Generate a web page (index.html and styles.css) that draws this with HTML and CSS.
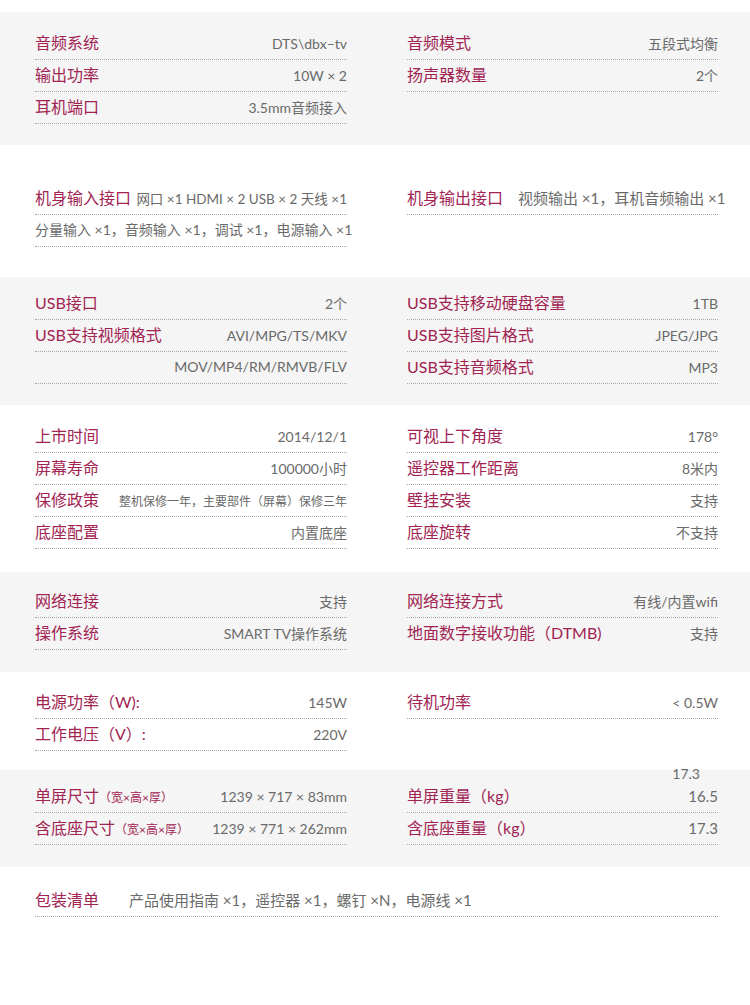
FILE: index.html
```html
<!DOCTYPE html>
<html lang="zh-CN">
<head>
    <meta charset="UTF-8">
    <meta name="viewport" content="width=device-width, initial-scale=1.0">
    <title>规格参数</title>
    <link rel="stylesheet" href="styles.css">
</head>
<body>
    <div class="band gray s1">
        <div class="grid">
            <div class="col">
                <div class="row"><span class="label">音频系统</span><span class="value">DTS\dbx–tv</span></div>
                <div class="row"><span class="label">输出功率</span><span class="value">10W × 2</span></div>
                <div class="row"><span class="label">耳机端口</span><span class="value">3.5mm音频接入</span></div>
            </div>
            <div class="col">
                <div class="row"><span class="label">音频模式</span><span class="value">五段式均衡</span></div>
                <div class="row"><span class="label">扬声器数量</span><span class="value">2个</span></div>
            </div>
        </div>
    </div>

    <div class="band s2">
        <div class="grid">
            <div class="col">
                <div class="row"><span class="label">机身输入接口</span><span class="value">网口 ×1 HDMI × 2 USB × 2 天线 ×1</span></div>
                <div class="row"><span class="value wide-text">分量输入 ×1，音频输入 ×1，调试 ×1，电源输入 ×1</span></div>
            </div>
            <div class="col">
                <div class="row start"><span class="label">机身输出接口</span><span class="value out">视频输出 ×1，耳机音频输出 ×1</span></div>
            </div>
        </div>
    </div>

    <div class="band gray s3">
        <div class="grid">
            <div class="col">
                <div class="row"><span class="label">USB接口</span><span class="value">2个</span></div>
                <div class="row"><span class="label">USB支持视频格式</span><span class="value">AVI/MPG/TS/MKV</span></div>
                <div class="row end"><span class="value">MOV/MP4/RM/RMVB/FLV</span></div>
            </div>
            <div class="col">
                <div class="row"><span class="label">USB支持移动硬盘容量</span><span class="value">1TB</span></div>
                <div class="row"><span class="label">USB支持图片格式</span><span class="value">JPEG/JPG</span></div>
                <div class="row"><span class="label">USB支持音频格式</span><span class="value">MP3</span></div>
            </div>
        </div>
    </div>

    <div class="band s4">
        <div class="grid">
            <div class="col">
                <div class="row"><span class="label">上市时间</span><span class="value">2014/12/1</span></div>
                <div class="row"><span class="label">屏幕寿命</span><span class="value">100000小时</span></div>
                <div class="row"><span class="label">保修政策</span><span class="value small">整机保修一年，主要部件（屏幕）保修三年</span></div>
                <div class="row"><span class="label">底座配置</span><span class="value">内置底座</span></div>
            </div>
            <div class="col">
                <div class="row"><span class="label">可视上下角度</span><span class="value">178°</span></div>
                <div class="row"><span class="label">遥控器工作距离</span><span class="value">8米内</span></div>
                <div class="row"><span class="label">壁挂安装</span><span class="value">支持</span></div>
                <div class="row"><span class="label">底座旋转</span><span class="value">不支持</span></div>
            </div>
        </div>
    </div>

    <div class="band gray s5">
        <div class="grid">
            <div class="col">
                <div class="row"><span class="label">网络连接</span><span class="value">支持</span></div>
                <div class="row"><span class="label">操作系统</span><span class="value">SMART TV操作系统</span></div>
            </div>
            <div class="col">
                <div class="row"><span class="label">网络连接方式</span><span class="value">有线/内置wifi</span></div>
                <div class="row plain"><span class="label">地面数字接收功能（DTMB)</span><span class="value">支持</span></div>
            </div>
        </div>
    </div>

    <div class="band s6">
        <div class="grid">
            <div class="col">
                <div class="row"><span class="label">电源功率（W):</span><span class="value">145W</span></div>
                <div class="row"><span class="label">工作电压（V）:</span><span class="value">220V</span></div>
            </div>
            <div class="col">
                <div class="row"><span class="label">待机功率</span><span class="value">&lt; 0.5W</span></div>
            </div>
        </div>
    </div>

    <div class="band gray s7">
        <div class="grid">
            <div class="col">
                <div class="row"><span class="label">单屏尺寸<small>（宽×高×厚）</small></span><span class="value">1239 × 717 × 83mm</span></div>
                <div class="row"><span class="label">含底座尺寸<small>（宽×高×厚）</small></span><span class="value">1239 × 771 × 262mm</span></div>
            </div>
            <div class="col">
                <span class="stray">17.3</span>
                <div class="row"><span class="label">单屏重量（kg）</span><span class="value big">16.5</span></div>
                <div class="row"><span class="label">含底座重量（kg）</span><span class="value big">17.3</span></div>
            </div>
        </div>
    </div>

    <div class="band s8">
        <div class="wide">
            <div class="row start"><span class="label">包装清单</span><span class="value pack">产品使用指南 ×1，遥控器 ×1，螺钉 ×N，电源线 ×1</span></div>
        </div>
    </div>
</body>
</html>
```

FILE: styles.css
```css
body {
    margin: 0;
    background: #fff;
    font-family: Lato, "Noto Sans CJK SC", sans-serif;
}

.band {
    background: #fff;
}
.gray {
    background: #f5f5f5;
}

/* band heights follow the reference */
.s1 { margin-top: 12px; padding: 16px 0 21px; }
.s2 { padding: 38px 0 30px; }
.s3 { padding: 11px 0 21px; }
.s4 { padding: 16px 0 23px; }
.s5 { padding: 14px 0 22px; }
.s6 { padding: 15px 0 19px; }
.s7 { padding: 11px 0 22px; }
.s8 { padding: 18px 0 89px; }

.grid {
    display: grid;
    grid-template-columns: 312px 311px;
    column-gap: 60px;
    padding-left: 35px;
}
.col {
    position: relative;
}
.wide {
    margin: 0 32px 0 35px;
}

.row {
    display: flex;
    justify-content: space-between;
    align-items: baseline;
    height: 31px;
    line-height: 30px;
    border-bottom: 1px dotted #a8a8a8;
    white-space: nowrap;
}
.row.start {
    justify-content: flex-start;
}
.row.end {
    justify-content: flex-end;
}
.row.plain {
    border-bottom-color: transparent;
}

.label {
    font-size: 16px;
    color: #a12452;
}
.label small {
    font-size: 12px;
}
.value {
    font-size: 14px;
    color: #6a6a6a;
}
.s2 .value {
    font-size: 13.5px;
}
.s2 .value.wide-text {
    font-size: 14px;
}
.s2 .value.out {
    margin-left: 15px;
    font-size: 15px;
}
.value.small {
    font-size: 12px;
}
.value.big {
    font-size: 15px;
}
.row.start .value.pack {
    margin-left: 30px;
    font-size: 15px;
}

.stray {
    position: absolute;
    top: -16px;
    right: 18px;
    font-size: 14px;
    color: #6a6a6a;
}
```
